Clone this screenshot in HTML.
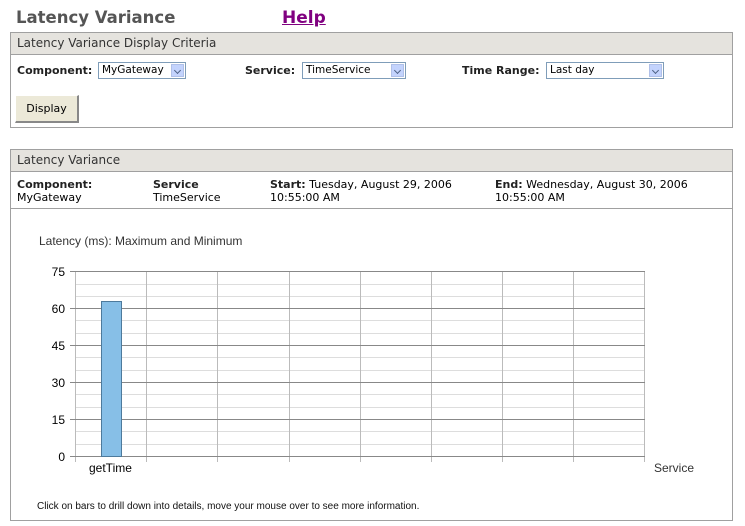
<!DOCTYPE html>
<html><head><style>
body{margin:0;width:745px;height:526px;background:#fff;font-family:"DejaVu Sans",Verdana,sans-serif;font-size:11px;color:#000;position:relative;overflow:hidden}
.a{position:absolute}
.panel{position:absolute;left:10px;width:721px;border:1px solid #a0a0a0}
.hdr{height:21px;background:#e5e3de;border-bottom:1px solid #a0a0a0;font-size:12px;color:#333;line-height:21px;padding-left:6px}
.sel{position:absolute;height:15px;border:1px solid #7f9db9;background:#fff;font-size:10.5px;line-height:15px;padding-left:3px;box-sizing:border-box;height:17px}
.sel i{position:absolute;right:1px;top:1px;width:13px;height:13px;background:#c3d3fd;border:1px solid #b0c0e8;box-sizing:border-box}
.sel i:after{content:"";position:absolute;left:3px;top:3px;width:4px;height:4px;border-right:1.5px solid #4d6185;border-bottom:1.5px solid #4d6185;transform:rotate(45deg)}
b{font-weight:bold;color:#222}
</style></head><body>
<div class="a" style="left:16px;top:8px;font-size:16.5px;font-weight:bold;color:#555">Latency Variance</div>
<div class="a" style="left:282px;top:8px;font-size:17px;font-weight:bold;color:#800080;text-decoration:underline">Help</div>

<div class="panel" style="top:32px;height:94px">
<div class="hdr">Latency Variance Display Criteria</div>
</div>
<div class="a" style="left:17px;top:64px"><b>Component:</b></div>
<div class="sel" style="left:98px;top:62px;width:88px">MyGateway<i></i></div>
<div class="a" style="left:245px;top:64px"><b>Service:</b></div>
<div class="sel" style="left:302px;top:62px;width:104px">TimeService<i></i></div>
<div class="a" style="left:462px;top:64px"><b>Time Range:</b></div>
<div class="sel" style="left:546px;top:62px;width:118px">Last day<i></i></div>
<div class="a" style="left:15px;top:95px;width:64px;height:28px;background:#ece9d8;border:1px solid #fff;border-right:2px solid #888;border-bottom:2px solid #888;box-sizing:border-box;text-align:center;line-height:26px">Display</div>

<div class="panel" style="top:149px;height:370px">
<div class="hdr">Latency Variance</div>
<div style="border-bottom:1px solid #a0a0a0;height:36px"></div>
</div>
<div class="a" style="left:17px;top:178px;line-height:13px"><b>Component:</b><br>MyGateway</div>
<div class="a" style="left:153px;top:178px;line-height:13px"><b>Service</b><br>TimeService</div>
<div class="a" style="left:270px;top:178px;line-height:13px"><b>Start:</b> Tuesday, August 29, 2006<br>10:55:00 AM</div>
<div class="a" style="left:495px;top:178px;line-height:13px"><b>End:</b> Wednesday, August 30, 2006<br>10:55:00 AM</div>

<svg class="a" style="left:0;top:0" width="745" height="526" font-family="Liberation Sans, Arial, sans-serif">
<text x="39" y="245" font-size="12" fill="#333">Latency (ms): Maximum and Minimum</text>
<g stroke="#ddd" stroke-width="1">
<line x1="75" x2="644" y1="284.5" y2="284.5"/><line x1="75" x2="644" y1="296.5" y2="296.5"/>
<line x1="75" x2="644" y1="320.5" y2="320.5"/><line x1="75" x2="644" y1="333.5" y2="333.5"/>
<line x1="75" x2="644" y1="357.5" y2="357.5"/><line x1="75" x2="644" y1="370.5" y2="370.5"/>
<line x1="75" x2="644" y1="394.5" y2="394.5"/><line x1="75" x2="644" y1="407.5" y2="407.5"/>
<line x1="75" x2="644" y1="431.5" y2="431.5"/><line x1="75" x2="644" y1="444.5" y2="444.5"/>
</g>
<g stroke="#bbb"><line x1="146.5" x2="146.5" y1="272" y2="462"/><line x1="217.5" x2="217.5" y1="272" y2="462"/><line x1="289.5" x2="289.5" y1="272" y2="462"/><line x1="360.5" x2="360.5" y1="272" y2="462"/><line x1="431.5" x2="431.5" y1="272" y2="462"/><line x1="502.5" x2="502.5" y1="272" y2="462"/><line x1="573.5" x2="573.5" y1="272" y2="462"/><line x1="644.5" x2="644.5" y1="272" y2="462"/><line x1="75.5" x2="75.5" y1="272" y2="462"/></g>
<g stroke="#888"><line x1="70" x2="645" y1="271.5" y2="271.5"/><line x1="70" x2="645" y1="308.5" y2="308.5"/><line x1="70" x2="645" y1="345.5" y2="345.5"/><line x1="70" x2="645" y1="382.5" y2="382.5"/><line x1="70" x2="645" y1="419.5" y2="419.5"/><line x1="70" x2="645" y1="456.5" y2="456.5"/></g>
<rect x="101.5" y="301.5" width="20" height="155" fill="#87bfe7" stroke="#4d7a9c"/>
<g font-size="12" fill="#000" text-anchor="end"><text x="65" y="276">75</text><text x="65" y="313">60</text><text x="65" y="350">45</text><text x="65" y="387">30</text><text x="65" y="424">15</text><text x="65" y="461">0</text></g>
<text x="89" y="472" font-size="12">getTime</text>
<text x="654" y="472" font-size="12" fill="#333">Service</text>
<text x="37" y="509" font-size="10" fill="#111">Click on bars to drill down into details, move your mouse over to see more information.</text>
</svg>
</body></html>
